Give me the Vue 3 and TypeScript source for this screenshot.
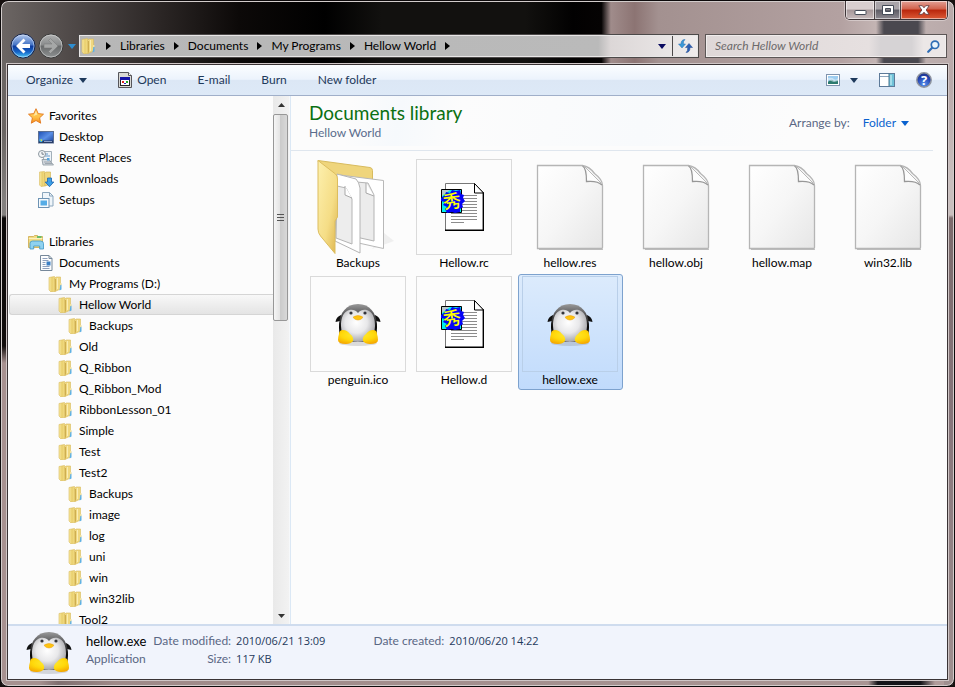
<script setup lang="ts">
import { ref } from 'vue'

interface TreeItem {
  id: number
  label: string
  level: number
  icon: string
}

interface FileItem {
  name: string
  icon: string
  framed: boolean
}

const crumbs: string[] = ['Libraries', 'Documents', 'My Programs', 'Hellow World']

const favorites: TreeItem[] = [
  { id: 0, label: 'Favorites', level: 0, icon: 'star' },
  { id: 1, label: 'Desktop', level: 1, icon: 'desktop' },
  { id: 2, label: 'Recent Places', level: 1, icon: 'recent' },
  { id: 3, label: 'Downloads', level: 1, icon: 'downloads' },
  { id: 4, label: 'Setups', level: 1, icon: 'setups' },
]

const libraries: TreeItem[] = [
  { id: 10, label: 'Libraries', level: 0, icon: 'library' },
  { id: 11, label: 'Documents', level: 1, icon: 'document' },
  { id: 12, label: 'My Programs (D:)', level: 2, icon: 'folder' },
  { id: 13, label: 'Hellow World', level: 3, icon: 'folder' },
  { id: 14, label: 'Backups', level: 4, icon: 'folder' },
  { id: 15, label: 'Old', level: 3, icon: 'folder' },
  { id: 16, label: 'Q_Ribbon', level: 3, icon: 'folder' },
  { id: 17, label: 'Q_Ribbon_Mod', level: 3, icon: 'folder' },
  { id: 18, label: 'RibbonLesson_01', level: 3, icon: 'folder' },
  { id: 19, label: 'Simple', level: 3, icon: 'folder' },
  { id: 20, label: 'Test', level: 3, icon: 'folder' },
  { id: 21, label: 'Test2', level: 3, icon: 'folder' },
  { id: 22, label: 'Backups', level: 4, icon: 'folder' },
  { id: 23, label: 'image', level: 4, icon: 'folder' },
  { id: 24, label: 'log', level: 4, icon: 'folder' },
  { id: 25, label: 'uni', level: 4, icon: 'folder' },
  { id: 26, label: 'win', level: 4, icon: 'folder' },
  { id: 27, label: 'win32lib', level: 4, icon: 'folder' },
  { id: 28, label: 'Tool2', level: 3, icon: 'folder' },
]

const groups: TreeItem[][] = [favorites, libraries]

const files: FileItem[] = [
  { name: 'Backups', icon: 'bigfolder', framed: false },
  { name: 'Hellow.rc', icon: 'source', framed: true },
  { name: 'hellow.res', icon: 'blank', framed: false },
  { name: 'hellow.obj', icon: 'blank', framed: false },
  { name: 'hellow.map', icon: 'blank', framed: false },
  { name: 'win32.lib', icon: 'blank', framed: false },
  { name: 'penguin.ico', icon: 'penguin', framed: true },
  { name: 'Hellow.d', icon: 'source', framed: true },
  { name: 'hellow.exe', icon: 'penguin', framed: true },
]

const currentFolder = ref(13)
const selectedFile = ref('hellow.exe')
const query = ref('')
</script>

<template>
  <svg class="sprite" aria-hidden="true">
    <defs>
      <linearGradient id="gFolder" x1="0" x2="1" y1="0" y2="0">
        <stop offset="0" stop-color="#f9eaa4" /><stop offset=".5" stop-color="#e9cf6d" /><stop offset="1" stop-color="#f4df8b" />
      </linearGradient>
      <linearGradient id="gFlap" x1="0" x2="1" y1="0" y2="1">
        <stop offset="0" stop-color="#fdf0ae" /><stop offset=".6" stop-color="#f5dd86" /><stop offset="1" stop-color="#dcb34c" />
      </linearGradient>
      <linearGradient id="gPaper" x1="0" x2="1" y1="0" y2="1">
        <stop offset="0" stop-color="#ffffff" /><stop offset=".5" stop-color="#f6f6f6" /><stop offset="1" stop-color="#e6e6e6" />
      </linearGradient>
      <linearGradient id="gStar" x1="0" x2="0" y1="0" y2="1">
        <stop offset="0" stop-color="#ffd96a" /><stop offset=".6" stop-color="#ffbf45" /><stop offset="1" stop-color="#f38a1d" />
      </linearGradient>
      <linearGradient id="gScreen" x1="0" x2="1" y1="0" y2="1">
        <stop offset="0" stop-color="#1c4fb4" /><stop offset=".5" stop-color="#5a8fe6" /><stop offset="1" stop-color="#123a92" />
      </linearGradient>
      <radialGradient id="gBelly" cx=".45" cy=".4" r=".65">
        <stop offset="0" stop-color="#ffffff" /><stop offset=".5" stop-color="#e8e8ea" /><stop offset="1" stop-color="#9a9a9e" />
      </radialGradient>
      <linearGradient id="gHead" x1="0" x2="0" y1="0" y2="1">
        <stop offset="0" stop-color="#9a9a9a" /><stop offset=".25" stop-color="#5c5c5e" /><stop offset=".6" stop-color="#0a0a0a" />
      </linearGradient>
      <radialGradient id="gFoot" cx=".5" cy=".35" r=".7">
        <stop offset="0" stop-color="#ffee3a" /><stop offset=".6" stop-color="#ffd80a" /><stop offset="1" stop-color="#f5a800" />
      </radialGradient>
      <linearGradient id="gBack" x1="0" x2="0" y1="0" y2="1">
        <stop offset="0" stop-color="#b9cdf0" /><stop offset=".46" stop-color="#4272c4" /><stop offset=".5" stop-color="#0d3a9c" /><stop offset=".75" stop-color="#1565c8" /><stop offset="1" stop-color="#52d3fb" />
      </linearGradient>
      <linearGradient id="gFwd" x1="0" x2="0" y1="0" y2="1">
        <stop offset="0" stop-color="#b0b1b1" /><stop offset=".46" stop-color="#8a8c8d" /><stop offset=".5" stop-color="#686a6b" /><stop offset="1" stop-color="#8f9293" />
      </linearGradient>
      <radialGradient id="gHelp" cx=".5" cy=".8" r=".8">
        <stop offset="0" stop-color="#5a94ee" /><stop offset=".6" stop-color="#2647b4" /><stop offset="1" stop-color="#1c2f86" />
      </radialGradient>
    </defs>

    <symbol id="folder" viewBox="1 0 16 16">
      <path d="M2 1.500 7.500.5 8 3v12.500l-4 .5-2-2z" fill="url(#gFolder)" stroke="#d9bb5c" stroke-width=".6" />
      <path d="M7.500 2.500 9 1h4.500v12L8 15.500z" fill="#efd77f" stroke="#d8ba5c" stroke-width=".6" />
      <path d="M8.500 3v11.500" stroke="#c7a445" stroke-width=".8" />
      <path d="M10.500 2v11" stroke="#faedb4" />
      <path d="M13.500 8.500h1v5l-2 1z" fill="#5fb1e4" />
      <path d="M13 7h1.500v2H13z" fill="#f2e1a0" />
    </symbol>
    <symbol id="star" viewBox="0 0 16 16">
      <path d="M8 .7 10.200 5.600 15.500 6.200 11.600 9.800 12.700 15.200 8 12.500 3.300 15.200 4.400 9.800.5 6.200 5.800 5.600z" fill="url(#gStar)" stroke="#e2761b" stroke-width=".9" stroke-linejoin="round" />
      <path d="M8 3 9.300 6.500 5.500 8z" fill="#fff0b8" opacity=".8" />
    </symbol>
    <symbol id="desktop" viewBox="0 0 16 16">
      <rect x=".5" y="2.500" width="15" height="11.500" fill="url(#gScreen)" stroke="#5b6f92" />
      <path d="M1 11.500h14V14H1z" fill="#283c66" />
      <path d="M6 12h8v1H6z" fill="#8ba0c8" />
      <circle cx="3" cy="11.500" r="1.700" fill="#44b3dd" /><path d="M2.500 10.500h1.500v1.500h-1z" fill="#f4d436" />
    </symbol>
    <symbol id="recent" viewBox="0 0 16 16">
      <path d="M5.500 1.500h8v10h-8z" fill="#eef4f9" stroke="#a3afb9" />
      <path d="M4 9.500h7l4.500 5.500H5z" fill="#d2d8de" stroke="#8c979f" stroke-width=".8" />
      <path d="M7 4h3m-3 2h5" stroke="#6a9ac9" /><path d="M9 8h2.500v2.500H9z" fill="#58a4dc" />
      <path d="M6 12h7m-6 1.500h7" stroke="#929ca5" stroke-width=".8" />
      <circle cx="4" cy="4" r="3.500" fill="#f4f6f8" stroke="#8c979f" /><path d="M4 2v2.200h2" fill="none" stroke="#5a6873" stroke-width=".8" />
    </symbol>
    <symbol id="downloads" viewBox="0 0 16 16">
      <path d="M1.500 1 6.500.5 7 15l-4 .5L1.500 14z" fill="url(#gFolder)" stroke="#d9bb5c" stroke-width=".6" />
      <path d="M6.500 2 8 1h4.500v12L7 15z" fill="#efd77f" stroke="#cfae4d" stroke-width=".6" />
      <path d="M9.500 7h4v4h2.300L11.500 15.700 7.200 11h2.300z" fill="#3d9fe6" stroke="#1c65b0" stroke-width=".8" stroke-linejoin="round" />
    </symbol>
    <symbol id="setups" viewBox="0 0 16 16">
      <path d="M4.500.5h7L15 4v10H4.500z" fill="#eff5fa" stroke="#8ba6bd" />
      <path d="M11.500.5V4H15" fill="none" stroke="#8ba6bd" />
      <rect x=".5" y="6.500" width="10.500" height="9" fill="#f6fafd" stroke="#6d93b4" />
      <rect x="2.500" y="8.500" width="6.500" height="5" fill="#55ace6" />
    </symbol>
    <symbol id="library" viewBox="0 0 16 16">
      <path d="M.5 2.500h5l1-1h3l.5 1h4.500v11H.5z" fill="#f3dc83" stroke="#cda94a" stroke-width=".8" />
      <path d="M9 2h4.500v2H9z" fill="#6bbd6c" /><path d="M.8 4.500h13.600" stroke="#fdf1bd" />
      <path d="M2 15V9.500Q2 7 4.500 7h8q3 0 3 2.500V15h-3.800v-3h-6v3z" fill="#8fd2f0" stroke="#3f96c5" stroke-width=".8" />
    </symbol>
    <symbol id="document" viewBox="0 0 16 16">
      <path d="M2.500.5h8.500L14 3.500v12H2.500z" fill="#fcfdfe" stroke="#76889a" />
      <path d="M11 .5v3h3" fill="none" stroke="#76889a" />
      <path d="M4.500 3.500h5M4.500 5.500h6M4.500 7.500h3M4.500 9.500h3M4.500 11.500h7M4.500 13.500h7" stroke="#8195b5" stroke-width=".9" />
      <path d="M8.500 6.500h4v4h-4z" fill="#3c7fc4" />
    </symbol>

    <symbol id="bigfolder" viewBox="0 0 96 96">
      <path d="M62 90 84 82 74 74z" fill="#d8d8d8" opacity=".35" />
      <path d="M8 1.500 60 8.500q2.500.5 2.500 3V80L26 70z" fill="#efd57c" stroke="#d8bb5e" />
      <path d="M30 16 73.500 21.500v68L44 83z" fill="#fff" stroke="#b8b8b8" />
      <path d="M46 23 58 24 64 36v46L46 78z" fill="#ececec" stroke="#b4b4b4" />
      <path d="M56 24v10l8 3" fill="#fff" stroke="#a8a8a8" />
      <path d="M27 15 46 20q3 3 4 9v65L25 82z" fill="#fff" stroke="#b4b4b4" />
      <path d="M27 27 36 29 42 40v45L26 79z" fill="#ededed" stroke="#b4b4b4" />
      <path d="M35 27v9l7 3" fill="#fff" stroke="#a8a8a8" />
      <path d="M8 1.500 25.500 15q2 2 2 5v38l-2.500 4v32.500L10.500 77Q8 74 8 70z" fill="url(#gFlap)" stroke="#dcbd5e" />
    </symbol>
    <symbol id="blank" viewBox="0 0 96 96">
      <path d="M15.500 6.500h45q7 1 12 8 8 6 8 12v62q0 1-1 1h-64z" fill="url(#gPaper)" stroke="#b5b5b5" stroke-width="1.300" />
      <path d="M17 90.500h64" stroke="#9d9d9d" opacity=".6" />
      <path d="M64.500 9q2 4 0 13.500 11-1 15.500 3z" fill="#fdfdfd" />
      <path d="M60.500 7q4 2 4 15.500 11-1 15.500 3.500" fill="none" stroke="#979797" stroke-width="1.300" />
      <path d="M62 7 79.500 24.500" stroke="#b8b8b8" />
    </symbol>
    <symbol id="source" viewBox="0 0 48 48">
      <path d="M5.500.5h29l9 9v38h-38z" fill="#fff" stroke="#777" />
      <path d="M34.500.5v9.500h9z" fill="#fff" stroke="#000" />
      <path d="M43.300 9.500v37.800H5" fill="none" stroke="#000" stroke-width="1.400" />
      <path d="M11 12.500h26m-26 3h26m-26 3h26m-26 3h26m-26 3h26m-26 3h26m-26 3h26m-26 3h26m-26 3h26m-26 3h13" stroke="#8c8c8c" />
      <path d="M1.500 6.500h20v23h-20z" fill="#00f0f0" stroke="#000" />
      <path d="M2 7h8L2 13z" fill="#b8c8c8" />
      <path d="m1 15 4-3 1-3 4 1 2-3 4 1 4-1 1 4 3 1-1 3 2 3-3 3 1 3-3 2 0 3-5 1-3-1-5 1-2-4 2-2-4-2 2-3-4-1z" fill="#0505f5" />
      <text x="3" y="25" class="kanji" transform="rotate(-8 11 18)">秀</text>
    </symbol>
    <symbol id="penguin" viewBox="0 0 48 48">
      <ellipse cx="24" cy="43" rx="19" ry="3" fill="#777" opacity=".25" />
      <path d="M7 15Q2 17 1.500 22l4.500-1-1 15h4zM41 15q5 2 5.500 7l-4.500-1 1 15h-4z" fill="#111" />
      <path d="M24 4C12 4 6 13 5 24c-1 11 6 18 19 18s20-7 19-18C42 13 36 4 24 4z" fill="url(#gHead)" />
      <path d="M24 13c-3-4-8-4-11-2-5 3-6 9-6 15 0 10 7 16 17 16s17-6 17-16c0-6-1-12-6-15-3-2-8-2-11 2z" fill="url(#gBelly)" />
      <path d="M20 16.500q4-2 8 0 1 0 .5 1.500-2 2-4.500 2t-4.500-2q-.5-1.500.5-1.500z" fill="#fdc310" stroke="#e89a08" stroke-width=".5" />
      <circle cx="17" cy="13" r="1.600" fill="#34343a" /><circle cx="31" cy="13" r="1.600" fill="#34343a" />
      <path d="M5 34q0-4 4-4 4 0 7 4 4 3 3 7-2 3-7 3-8 0-8-4 0-3 1-6zM43 34q0-4-4-4-4 0-7 4-4 3-3 7 2 3 7 3 8 0 8-4 0-3-1-6z" fill="url(#gFoot)" />
    </symbol>
  </svg>

  <div class="window">
    <header class="caption">
      <div class="controls">
        <button class="ctl min" aria-label="Minimize">
          <svg width="13" height="7" viewBox="0 0 13 7"><rect x="1" y="1.500" width="11" height="4" rx=".5" fill="#fff" stroke="#444b57" /></svg>
        </button>
        <button class="ctl max" aria-label="Maximize">
          <svg width="12" height="10" viewBox="0 0 12 10"><path fill-rule="evenodd" d="M.5.500h11v9H.5zM3.500 3.500v3h5v-3z" fill="#fff" stroke="#444b57" /></svg>
        </button>
        <button class="ctl close" aria-label="Close">
          <svg width="12" height="10" viewBox="0 0 14 11"><path d="M1 .5h4l2 2.500L9 .5h4L9.500 5.500l3.500 5H9L7 8l-2 2.500H1l3.500-5z" fill="#fff" stroke="#54353a" stroke-width=".9" /></svg>
        </button>
      </div>
    </header>

    <nav class="navbar" aria-label="Address">
      <div class="travel">
        <button aria-label="Back">
          <svg width="26" height="26" viewBox="0 0 26 26">
            <circle cx="13" cy="13" r="12" fill="url(#gBack)" stroke="#15244a" /><circle cx="13" cy="13" r="11" fill="none" stroke="#cfe0f8" stroke-opacity=".6" />
            <path d="M13.500 5.500 6 13l7.500 7.500 2-2L12 15h8v-4h-8l3.500-3.500z" fill="#fff" />
          </svg>
        </button>
        <button aria-label="Forward">
          <svg width="26" height="26" viewBox="0 0 26 26">
            <circle cx="13" cy="13" r="12" fill="url(#gFwd)" stroke="#3b3b3b" /><circle cx="13" cy="13" r="11" fill="none" stroke="#dadada" stroke-opacity=".6" />
            <path d="M12.500 5.500 20 13l-7.500 7.500-2-2L14 15H6v-4h8l-3.500-3.500z" fill="#a5a7a7" stroke="#777" stroke-width=".5" />
          </svg>
        </button>
        <button class="history" aria-label="Recent pages">
          <svg width="8" height="5" viewBox="0 0 8 5"><path d="M0 0h8L4 5z" fill="#2e8ed0" /></svg>
        </button>
      </div>
      <div class="address">
        <svg class="i16"><use href="#folder" /></svg>
        <svg class="sep" viewBox="0 0 5 8"><path d="M0 0 5 4 0 8z" /></svg>
        <template v-for="c in crumbs" :key="c">
          <button class="crumb">{{ c }}</button>
          <svg class="sep" viewBox="0 0 5 8"><path d="M0 0 5 4 0 8z" /></svg>
        </template>
        <span class="grow"></span>
        <button class="previous" aria-label="Previous locations">
          <svg width="8" height="5" viewBox="0 0 8 5"><path d="M0 0h8L4 5z" fill="#0a0a60" /></svg>
        </button>
        <button class="refresh" aria-label="Refresh">
          <svg width="15" height="14" viewBox="0 0 15 14">
            <path d="M7 .5Q3 .5 3 5H.5L4 9 7.500 5H5.300Q5 2 7 .5z" fill="#3b9ad8" stroke="#2b6db0" stroke-width=".5" />
            <path d="M8 13.500q4 0 4-5h2.500L11 4.500 7.500 8.500h2.200q.300 3.500-1.700 5z" fill="#2c5fb3" stroke="#204a92" stroke-width=".5" />
          </svg>
        </button>
      </div>
      <label class="search">
        <input v-model="query" type="text" aria-label="Search Hellow World" placeholder="Search Hellow World" />
        <svg width="13" height="13" viewBox="0 0 13 13"><circle cx="8" cy="4.800" r="3.700" fill="#e9f4fc" stroke="#2f6db5" stroke-width="1.700" /><path d="M5.200 7.700 1.200 11.800" stroke="#2f6db5" stroke-width="2.200" stroke-linecap="round" /></svg>
      </label>
    </nav>

    <div class="client">
      <div class="commands" role="toolbar" aria-label="Commands">
        <button class="organize">Organize <svg width="8" height="5" viewBox="0 0 8 5"><path d="M0 0h8L4 5z" /></svg></button>
        <button class="open">
          <svg width="14" height="16" viewBox="0 0 14 16">
            <path d="M.5.5h10l3 3v12H.5z" fill="#d9d9d6" stroke="#55555a" /><path d="M10.500.5v3h3" fill="#fff" stroke="#55555a" />
            <rect x="2.500" y="5.500" width="9" height="8" fill="#fff" stroke="#222" /><path d="M2 5h10v3H2z" fill="#1414a8" />
            <path d="M4 9h2v2H4z" fill="#d22" /><path d="M6 11h2v1H6z" fill="#22b" /><path d="M8 9h2v2H8z" fill="#2a2" />
          </svg>
          Open
        </button>
        <button>E-mail</button>
        <button>Burn</button>
        <button>New folder</button>
        <span class="grow"></span>
        <button class="views" aria-label="Change your view">
          <svg width="14" height="12" viewBox="0 0 14 12"><rect x=".5" y=".5" width="13" height="11" fill="#fff" stroke="#7f94ae" /><path d="M2 2h10v8H2z" fill="#9dcdf0" /><path d="M2 8q3-4 6-1l4-1v4H2z" fill="#2c7a6e" /><path d="M2 4q4-1 6 1t4-1v3L8 8 2 6z" fill="#e6f4fb" opacity=".6" /></svg>
          <svg width="8" height="5" viewBox="0 0 8 5"><path d="M0 0h8L4 5z" /></svg>
        </button>
        <button aria-label="Show the preview pane">
          <svg width="16" height="14" viewBox="0 0 16 14"><rect x=".5" y=".5" width="15" height="13" fill="#fff" stroke="#5d7a99" /><path d="M1 3.500h9" stroke="#8da5bd" /><path d="M10 1h5v12h-5z" fill="#6fc1d8" /><path d="M10 .500v13" stroke="#48748f" /><path d="M12 2v10" stroke="#b5e4ef" stroke-width="1.500" /></svg>
        </button>
        <button aria-label="Help">
          <svg class="help" width="16" height="16" viewBox="0 0 16 16"><circle cx="8" cy="8" r="7.200" fill="url(#gHelp)" stroke="#8f949e" stroke-width="1.500" /><text x="8" y="12.500" text-anchor="middle">?</text></svg>
        </button>
      </div>

      <div class="body">
        <nav class="tree" aria-label="Folders">
          <ul v-for="(group, g) in groups" :key="g">
            <li v-for="item in group" :key="item.id">
              <a
                href="#"
                :class="['lv' + item.level, { current: item.id === currentFolder }]"
                @click.prevent="currentFolder = item.id"
              >
                <svg class="i16"><use :href="'#' + item.icon" /></svg>{{ item.label }}
              </a>
            </li>
          </ul>
        </nav>
        <div class="scrollbar">
          <button aria-label="Scroll up"><svg width="7" height="4" viewBox="0 0 7 4"><path d="M0 4h7L3.500 0z" /></svg></button>
          <div class="track"><div class="thumb"><i></i><i></i><i></i></div></div>
          <button aria-label="Scroll down"><svg width="7" height="4" viewBox="0 0 7 4"><path d="M0 0h7L3.500 4z" /></svg></button>
        </div>
        <main>
          <header class="library">
            <div>
              <h1>Documents library</h1>
              <p>Hellow World</p>
            </div>
            <div class="arrange">
              <span>Arrange by:</span>
              <button>Folder <svg width="8" height="5" viewBox="0 0 8 5"><path d="M0 0h8L4 5z" /></svg></button>
            </div>
          </header>
          <div class="files">
            <button
              v-for="f in files"
              :key="f.name"
              :class="['file', { selected: f.name === selectedFile }]"
              @click="selectedFile = f.name"
            >
              <span :class="['thumbnail', { framed: f.framed }]"><svg><use :href="'#' + f.icon" /></svg></span>
              <span class="name">{{ f.name }}</span>
            </button>
          </div>
        </main>
      </div>

      <footer class="details">
        <svg class="preview"><use href="#penguin" /></svg>
        <div class="title">
          <strong>hellow.exe</strong>
          <span>Application</span>
        </div>
        <dl>
          <dt>Date modified:</dt><dd>2010/06/21 13:09</dd>
          <dt>Size:</dt><dd>117 KB</dd>
        </dl>
        <dl class="created">
          <dt>Date created:</dt><dd>2010/06/20 14:22</dd>
        </dl>
      </footer>
    </div>
  </div>
</template>

<style>
body {
  background: #16100f;
}
</style>

<style scoped>
* {
  box-sizing: border-box;
}
.sprite {
  position: absolute;
  width: 0;
  height: 0;
}
.kanji {
  font: 500 18px 'Noto Sans CJK JP', sans-serif;
  fill: #ffff00;
}
button {
  display: flex;
  align-items: center;
  border: 0;
  padding: 0;
  background: none;
  color: inherit;
  font: inherit;
  white-space: nowrap;
}
svg {
  flex: none;
}
.grow {
  flex: 1;
}
.i16 {
  width: 16px;
  height: 16px;
}
.window {
  display: flex;
  flex-direction: column;
  height: 100vh;
  padding: 0 6px 6px;
  border: 1px solid #0d0a0b;
  border-radius: 8px;
  overflow: hidden;
  font: 12px/16px Lato, 'Open Sans', sans-serif;
  color: #000;
  box-shadow: inset 0 0 0 1px #d2cccb;
  background:
    linear-gradient(90deg, #4a484f00, #4a484f 16% 84%, #4a484f00) right 28px top / 50px 65px no-repeat,
    linear-gradient(#fff0 0 85px, #6662 130px, #aaa6 200px, #aaa6 214px, #0b0808 217px, #120d0c 345px, #a79190 362px) left / 10px 100% no-repeat,
    linear-gradient(#fff0 0 85px, #c9bfbe 180px, #c9bfbe 214px, #7c6b6c 217px, #86757a 60%, #a09090 100%) right / 10px 100% no-repeat,
    linear-gradient(90deg, #a79190 0 4%, #806f70 6%, #9f8a89 12%, #a99594 91%, #151419 92% 96.500%, #b09c9b 98%) bottom / 100% 10px no-repeat,
    linear-gradient(90deg, #6c6664 0, #494342 9%, #2a2524 17%, #0c0908 25%, #000 34%, #12110f 40% 55%, #020101 60%, #050303 63%, #a08c8b 64%, #8c7473 66.500%, #a39190 69%, #b3a1a1 88%, #c4b5b4 92%, #b9aaaa 100%);
}
.caption {
  display: flex;
  justify-content: flex-end;
  height: 33px;
  flex: none;
}
.controls {
  display: flex;
  height: 19px;
  border: 1px solid #3e3538;
  border-top: 0;
  border-radius: 0 0 5px 5px;
  overflow: hidden;
  box-shadow: 0 0 0 1px #e4dcdc99;
}
.ctl {
  justify-content: center;
  border-right: 1px solid #4b4346;
  background: linear-gradient(#d8cecf 0 45%, #a6989a 50%, #c5b9ba);
  box-shadow: inset 0 0 0 1px #fff8;
}
.min {
  width: 29px;
}
.max {
  width: 26px;
  background: linear-gradient(#a9a4a9 0 45%, #5d5c65 50%, #8d8990);
}
.close {
  width: 46px;
  border-right: 0;
  background: linear-gradient(#e3a196 0, #d1614b 45%, #b9260c 50%, #d5502e 90%);
}
.min svg {
  margin-top: 5px;
}
.navbar {
  display: flex;
  align-items: center;
  flex: none;
  height: 24px;
  margin: 0 0 6px 3px;
}
.travel {
  display: flex;
  gap: 2px;
  width: 69px;
  margin: -2px 0;
}
.history {
  margin-left: 2px;
}
.address {
  display: flex;
  align-items: center;
  flex: 1;
  height: 22px;
  padding-left: 1px;
  border: 1px solid #e8e6e6;
  outline: 1px solid #4c4949;
  background: linear-gradient(90deg, #b7b7b7 0, #bababa 84%, #dcd7d7 86%, #efecec 100%);
}
.sep {
  width: 5px;
  height: 8px;
  margin: 0 9px;
}
.previous {
  width: 20px;
  height: 100%;
  justify-content: center;
}
.refresh {
  justify-content: center;
  width: 25px;
  height: 100%;
  border-left: 1px solid #4c4949;
}
.search {
  display: flex;
  align-items: center;
  width: 240px;
  height: 22px;
  margin: 0 2px 0 8px;
  padding: 0 5px 0 8px;
  border: 1px solid #f1eded;
  outline: 1px solid #5c5656;
  background: linear-gradient(90deg, #dfd8d8 0, #e6e0e0 68%, #d6d3d5 73% 86%, #ece7e7 91%);
}
.search input {
  flex: 1;
  min-width: 0;
  padding: 0;
  border: 0;
  outline: 0;
  background: none;
  font: inherit;
}
.search input::placeholder {
  color: #6d6a6b;
  font-style: italic;
  opacity: 1;
}
.client {
  display: flex;
  flex: 1;
  flex-direction: column;
  min-height: 0;
  border: 1px solid #3a3335;
  background: #fcfcfc;
  box-shadow: 0 0 0 1px #cfc6c6;
}
.commands {
  display: flex;
  align-items: center;
  flex: none;
  gap: 31px;
  height: 31px;
  padding: 0 15px 0 18px;
  border-bottom: 1px solid #a0afc9;
  color: #1e395b;
  background: linear-gradient(#fbfdff 0, #ecf3fc 48%, #dce7f5 50%, #dde9f7 100%);
}
.organize {
  gap: 6px;
}
.open {
  gap: 5px;
}
.views {
  gap: 10px;
}
.commands .grow {
  margin-right: -31px;
}
.commands .views,
.commands .views + button {
  margin-right: -10px;
}
.organize,
.views {
  fill: #1e395b;
}
.help text {
  font: 700 13px 'Open Sans', sans-serif;
  fill: #fff;
}
.body {
  display: flex;
  flex: 1;
  min-height: 0;
}
.tree {
  width: 265px;
  padding-top: 9px;
  overflow: hidden;
}
ul {
  margin: 0 0 21px;
  padding: 0;
  list-style: none;
}
.tree a {
  display: flex;
  align-items: center;
  gap: 5px;
  height: 21px;
  margin-left: 1px;
  border: 1px solid transparent;
  color: #000;
  text-decoration: none;
  white-space: nowrap;
}
.tree a.current {
  border-color: #d5d5d5;
  border-right: 0;
  border-radius: 3px 0 0 3px;
  background: linear-gradient(#f8f8f8, #e4e4e4);
}
.lv0 {
  padding-left: 18px;
}
.lv1 {
  padding-left: 28px;
}
.lv2 {
  padding-left: 38px;
}
.lv3 {
  padding-left: 48px;
}
.lv4 {
  padding-left: 58px;
}
.scrollbar {
  display: flex;
  flex-direction: column;
  width: 17px;
  border-right: 1px solid #f6f8fa;
  background: linear-gradient(90deg, #e9e9e9, #f2f2f2);
}
.scrollbar button {
  justify-content: center;
  height: 17px;
  fill: #333;
}
.track {
  flex: 1;
}
.thumb {
  display: flex;
  flex-direction: column;
  align-items: center;
  justify-content: center;
  gap: 2px;
  width: 15px;
  height: 42%;
  margin-top: 1px;
  border: 1px solid #979797;
  border-radius: 2px;
  background: linear-gradient(90deg, #f5f5f5, #e4e4e4 45%, #cbcbcb 50%, #d8d8d8);
}
.thumb i {
  width: 7px;
  height: 1px;
  background: #555;
}
main {
  flex: 1;
  min-width: 0;
  border-left: 1px solid #dbe8f5;
  background: linear-gradient(100deg, #fcfcfc 60px, #f6f9fc 110px, #fcfcfc 170px, #f8fafc 350px, #fcfcfc 500px) top / 100% 50px no-repeat;
}
.library {
  display: flex;
  justify-content: space-between;
  height: 55px;
  margin-right: 14px;
  padding: 5px 24px 0 18px;
  border-bottom: 1px solid #dfe6ee;
}
h1 {
  margin: 0;
  color: #0b7012;
  font-size: 19px;
  font-weight: 400;
  line-height: 24px;
}
p {
  margin: 0;
  color: #5a6c8c;
}
.arrange {
  display: flex;
  align-items: center;
  gap: 13px;
  height: 44px;
  color: #5a6784;
}
.arrange button {
  gap: 5px;
  color: #0a62cf;
  fill: #0a62cf;
}
.files {
  display: grid;
  grid-template-columns: repeat(auto-fill, 105px);
  gap: 1px;
  padding: 6px 0 0 15px;
}
.file {
  flex-direction: column;
  height: 116px;
  padding: 1px 4px 1px 3px;
  border: 1px solid transparent;
  border-radius: 3px;
}
.selected {
  border-color: #7da2ce;
  background: linear-gradient(#dcebfc, #c1dbfc);
}
.thumbnail {
  display: flex;
  align-items: center;
  justify-content: center;
  width: 96px;
  height: 96px;
}
.thumbnail svg {
  width: 96px;
  height: 96px;
}
.framed {
  border: 1px solid #dadada;
}
.thumbnail.framed svg {
  width: 48px;
  height: 48px;
}
.selected .framed {
  border-color: #b9cfe9;
}
.details {
  display: flex;
  flex: none;
  height: 55px;
  padding: 6px 17px 0;
  border-top: 2px solid #cfdcee;
  background: #f1f4fc;
  color: #1e395b;
  line-height: 18px;
}
.preview {
  width: 48px;
  height: 48px;
  margin-top: -4px;
}
.title {
  display: flex;
  flex-direction: column;
  margin: 0 7px 0 13px;
  color: #5a6784;
}
.title strong {
  color: #000;
  font-size: 13px;
  font-weight: 400;
}
dl {
  display: grid;
  grid-template-columns: auto auto;
  align-content: start;
  column-gap: 5px;
  margin: 0;
}
dt {
  color: #5a6784;
  text-align: right;
}
dd {
  margin: 0;
  font-family: 'Open Sans', sans-serif;
  font-size: 11px;
}
.created {
  margin-left: 48px;
}
</style>
